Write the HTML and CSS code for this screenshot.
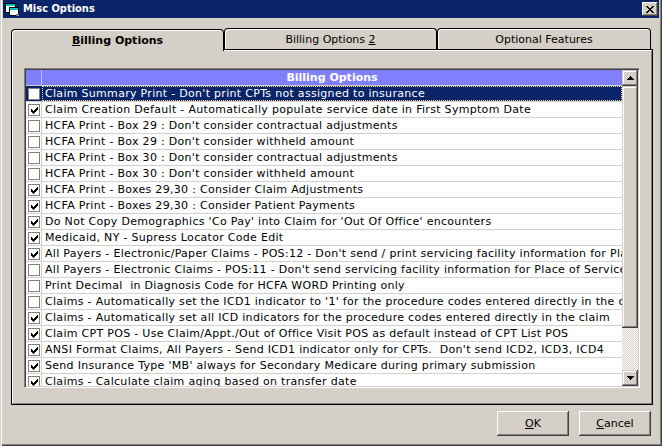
FILE: index.html
```html
<!DOCTYPE html>
<html>
<head>
<meta charset="utf-8">
<link rel="stylesheet" href="styles.css">
</head>
<body>
<div class="window">
  <div class="titlebar">
    <svg class="app-icon" viewBox="0 0 16 16" shape-rendering="crispEdges">
      <rect x="1" y="2" width="11" height="10" fill="#000"/>
      <rect x="2" y="3" width="9" height="2" fill="#00c0c0"/>
      <rect x="2" y="5" width="9" height="6" fill="#fff"/>
      <rect x="5" y="6" width="10" height="9" fill="#000"/>
      <rect x="6" y="7" width="8" height="2" fill="#00c0c0"/>
      <rect x="6" y="9" width="8" height="5" fill="#fff"/>
      <rect x="12" y="13" width="3" height="2" fill="#808080"/>
    </svg>
    <span class="title">Misc Options</span>
    <span class="close">
      <svg viewBox="0 0 8 7" width="8" height="7" shape-rendering="crispEdges">
        <path d="M0 0h2v1h1v1h2v-1h1v-1h2v1h-1v1h-1v1h-1v1h1v1h1v1h1v1h-2v-1h-1v-1h-2v1h-1v1h-2v-1h1v-1h1v-1h1v-1h-1v-1h-1v-1h-1z" fill="#000"/>
      </svg>
    </span>
  </div>
  <div class="client">
    <div class="tabs">
      <div class="tab tab-a active"><span><u>B</u>illing Options</span></div>
      <div class="tab tab-b"><span>Billing Options <u>2</u></span></div>
      <div class="tab tab-c"><span>Optional Features</span></div>
    </div>
    <div class="panel">
      <div class="list">
        <div class="grid">
          <div class="head"><span class="head-chk"></span><span class="head-label">Billing Options</span></div>
          <div class="row selected"><span class="chk-cell"><span class="box"></span></span><span class="text">Claim Summary Print - Don't print CPTs not assigned to insurance</span></div>
          <div class="row"><span class="chk-cell"><span class="box checked"><svg viewBox="0 0 7 7" width="7" height="7" shape-rendering="crispEdges"><path d="M0 2H1V3H2V4H3V3H4V2H5V1H6V0H7V3H6V4H5V5H4V6H3V7H2V6H1V5H0Z"/></svg></span></span><span class="text">Claim Creation Default - Automatically populate service date in First Symptom Date</span></div>
          <div class="row"><span class="chk-cell"><span class="box"></span></span><span class="text">HCFA Print - Box 29 : Don't consider contractual adjustments</span></div>
          <div class="row"><span class="chk-cell"><span class="box"></span></span><span class="text">HCFA Print - Box 29 : Don't consider withheld amount</span></div>
          <div class="row"><span class="chk-cell"><span class="box"></span></span><span class="text">HCFA Print - Box 30 : Don't consider contractual adjustments</span></div>
          <div class="row"><span class="chk-cell"><span class="box"></span></span><span class="text">HCFA Print - Box 30 : Don't consider withheld amount</span></div>
          <div class="row"><span class="chk-cell"><span class="box checked"><svg viewBox="0 0 7 7" width="7" height="7" shape-rendering="crispEdges"><path d="M0 2H1V3H2V4H3V3H4V2H5V1H6V0H7V3H6V4H5V5H4V6H3V7H2V6H1V5H0Z"/></svg></span></span><span class="text">HCFA Print - Boxes 29,30 : Consider Claim Adjustments</span></div>
          <div class="row"><span class="chk-cell"><span class="box checked"><svg viewBox="0 0 7 7" width="7" height="7" shape-rendering="crispEdges"><path d="M0 2H1V3H2V4H3V3H4V2H5V1H6V0H7V3H6V4H5V5H4V6H3V7H2V6H1V5H0Z"/></svg></span></span><span class="text">HCFA Print - Boxes 29,30 : Consider Patient Payments</span></div>
          <div class="row"><span class="chk-cell"><span class="box checked"><svg viewBox="0 0 7 7" width="7" height="7" shape-rendering="crispEdges"><path d="M0 2H1V3H2V4H3V3H4V2H5V1H6V0H7V3H6V4H5V5H4V6H3V7H2V6H1V5H0Z"/></svg></span></span><span class="text">Do Not Copy Demographics 'Co Pay' into Claim for 'Out Of Office' encounters</span></div>
          <div class="row"><span class="chk-cell"><span class="box checked"><svg viewBox="0 0 7 7" width="7" height="7" shape-rendering="crispEdges"><path d="M0 2H1V3H2V4H3V3H4V2H5V1H6V0H7V3H6V4H5V5H4V6H3V7H2V6H1V5H0Z"/></svg></span></span><span class="text">Medicaid, NY - Supress Locator Code Edit</span></div>
          <div class="row"><span class="chk-cell"><span class="box checked"><svg viewBox="0 0 7 7" width="7" height="7" shape-rendering="crispEdges"><path d="M0 2H1V3H2V4H3V3H4V2H5V1H6V0H7V3H6V4H5V5H4V6H3V7H2V6H1V5H0Z"/></svg></span></span><span class="text">All Payers - Electronic/Paper Claims - POS:12 - Don't send / print servicing facility information for Place of Service 12</span></div>
          <div class="row"><span class="chk-cell"><span class="box"></span></span><span class="text">All Payers - Electronic Claims - POS:11 - Don't send servicing facility information for Place of Service 11</span></div>
          <div class="row"><span class="chk-cell"><span class="box"></span></span><span class="text">Print Decimal &nbsp;in Diagnosis Code for HCFA WORD Printing only</span></div>
          <div class="row"><span class="chk-cell"><span class="box"></span></span><span class="text">Claims - Automatically set the ICD1 indicator to '1' for the procedure codes entered directly in the claim</span></div>
          <div class="row"><span class="chk-cell"><span class="box checked"><svg viewBox="0 0 7 7" width="7" height="7" shape-rendering="crispEdges"><path d="M0 2H1V3H2V4H3V3H4V2H5V1H6V0H7V3H6V4H5V5H4V6H3V7H2V6H1V5H0Z"/></svg></span></span><span class="text">Claims - Automatically set all ICD indicators for the procedure codes entered directly in the claim</span></div>
          <div class="row"><span class="chk-cell"><span class="box checked"><svg viewBox="0 0 7 7" width="7" height="7" shape-rendering="crispEdges"><path d="M0 2H1V3H2V4H3V3H4V2H5V1H6V0H7V3H6V4H5V5H4V6H3V7H2V6H1V5H0Z"/></svg></span></span><span class="text">Claim CPT POS - Use Claim/Appt./Out of Office Visit POS as default instead of CPT List POS</span></div>
          <div class="row"><span class="chk-cell"><span class="box checked"><svg viewBox="0 0 7 7" width="7" height="7" shape-rendering="crispEdges"><path d="M0 2H1V3H2V4H3V3H4V2H5V1H6V0H7V3H6V4H5V5H4V6H3V7H2V6H1V5H0Z"/></svg></span></span><span class="text">ANSI Format Claims, All Payers - Send ICD1 indicator only for CPTs. &nbsp;Don't send ICD2, ICD3, ICD4</span></div>
          <div class="row"><span class="chk-cell"><span class="box checked"><svg viewBox="0 0 7 7" width="7" height="7" shape-rendering="crispEdges"><path d="M0 2H1V3H2V4H3V3H4V2H5V1H6V0H7V3H6V4H5V5H4V6H3V7H2V6H1V5H0Z"/></svg></span></span><span class="text">Send Insurance Type 'MB' always for Secondary Medicare during primary submission</span></div>
          <div class="row"><span class="chk-cell"><span class="box checked"><svg viewBox="0 0 7 7" width="7" height="7" shape-rendering="crispEdges"><path d="M0 2H1V3H2V4H3V3H4V2H5V1H6V0H7V3H6V4H5V5H4V6H3V7H2V6H1V5H0Z"/></svg></span></span><span class="text">Claims - Calculate claim aging based on transfer date</span></div>
        </div>
        <div class="scrollbar">
          <div class="sb-btn"><svg viewBox="0 0 7 4" width="7" height="4" shape-rendering="crispEdges"><path d="M3 0H4V1H5V2H6V3H7V4H0V3H1V2H2V1H3Z"/></svg></div>
          <div class="sb-track"><div class="sb-thumb"></div></div>
          <div class="sb-btn"><svg viewBox="0 0 7 4" width="7" height="4" shape-rendering="crispEdges"><path d="M0 0H7V1H6V2H5V3H4V4H3V3H2V2H1V1H0Z"/></svg></div>
        </div>
      </div>
    </div>
    <div class="buttons">
      <button class="btn"><u>O</u>K</button>
      <button class="btn"><u>C</u>ancel</button>
    </div>
  </div>
</div>
</body>
</html>
```
FILE: styles.css
```css
* { box-sizing: border-box; }
html, body { margin: 0; padding: 0; }
body {
  width: 662px;
  height: 446px;
  overflow: hidden;
  background: #d4d0c8;
  font-family: "DejaVu Sans", Verdana, sans-serif;
  font-size: 11px;
  color: #000;
}
.window {
  width: 662px;
  height: 446px;
  background: #d4d0c8;
  padding: 0 3px 3px 3px;
  display: flex;
  flex-direction: column;
  box-shadow: inset 1px 0 #d4d0c8, inset 2px 0 #fff, inset -1px -1px #404040, inset -2px -2px #808080;
}
.titlebar {
  flex: none;
  height: 18px;
  background: #0a246a;
  color: #fff;
  display: flex;
  align-items: center;
}
.app-icon { width: 16px; height: 16px; margin-left: 1px; flex: none; }
.title {
  flex: 1;
  margin-left: 3px;
  font-family: "DejaVu Sans Condensed", "DejaVu Sans", sans-serif;
  font-weight: bold;
  font-size: 11px;
  line-height: 18px;
}
.close {
  flex: none;
  width: 16px;
  height: 14px;
  margin-right: 1px;
  background: #d4d0c8;
  display: flex;
  align-items: center;
  justify-content: center;
  box-shadow: inset -1px -1px #404040, inset 1px 1px #fff, inset -2px -2px #808080;
}
.client {
  flex: 1;
  padding: 10px 6px 0 8px;
  display: flex;
  flex-direction: column;
}
.tabs {
  display: flex;
  align-items: flex-end;
  height: 21px;
  position: relative;
  z-index: 1;
}
.tab {
  height: 21px;
  background: #d4d0c8;
  border: 1px solid #000;
  border-bottom: 0;
  border-radius: 4px 4px 0 0;
  box-shadow: inset 1px 1px #fff;
  display: flex;
  align-items: center;
  justify-content: center;
  line-height: 13px;
}
.tab-a { width: 213px; }
.tab-b { width: 213px; }
.tab-c { width: 214px; }
.tab.active {
  height: 22px;
  margin-bottom: -2px;
  font-weight: bold;
}
.panel {
  width: 642px;
  height: 356px;
  border: 1px solid #000;
  box-shadow: inset 1px 1px #fff, inset -1px -1px #808080;
  padding: 18px 0 0 12px;
}
.list {
  width: 616px;
  height: 320px;
  border: 1px solid;
  border-color: #808080 #fff #fff #808080;
  box-shadow: inset 1px 1px #404040, inset -1px -1px #d4d0c8;
  padding: 1px;
  display: flex;
}
.grid {
  width: 596px;
  background: #fff;
  overflow: hidden;
}
.head {
  display: flex;
  height: 16px;
  background: #8080ff;
  border-bottom: 1px solid #d4d0c8;
}
.head-chk {
  width: 16px;
  border-right: 1px solid #c0c0ff;
}
.head-label {
  flex: 1;
  text-align: center;
  color: #fff;
  font-weight: bold;
  line-height: 15px;
}
.row {
  display: flex;
  height: 16px;
  border-bottom: 1px solid #d4d0c8;
  line-height: 15px;
}
.chk-cell {
  width: 16px;
  flex: none;
  border-right: 1px solid #d4d0c8;
  padding: 2px 0 0 2px;
}
.box {
  width: 12px;
  height: 12px;
  border: 1px solid #808080;
  background: #fff;
  display: flex;
  align-items: center;
  justify-content: center;
}
.box svg { fill: #000; }
.text {
  flex: 1;
  padding-left: 3px;
  white-space: nowrap;
  overflow: hidden;
  letter-spacing: 0.3px;
}
.row.selected { background: #0a246a; color: #fff; }
.row.selected .chk-cell { border-right-color: #0a246a; }
.row.selected .text { outline: 1px dotted #f5db95; outline-offset: -1px; }
.scrollbar {
  width: 16px;
  flex: none;
  display: flex;
  flex-direction: column;
}
.sb-btn, .sb-thumb {
  background: #d4d0c8;
  box-shadow: inset -1px -1px #404040, inset 1px 1px #d4d0c8, inset -2px -2px #808080, inset 2px 2px #fff;
}
.sb-btn {
  flex: none;
  height: 16px;
  display: flex;
  align-items: center;
  justify-content: center;
}
.sb-btn svg { fill: #000; }
.sb-track {
  flex: 1;
  background: repeating-conic-gradient(#fff 0 25%, #d4d0c8 0 50%) 0 0 / 2px 2px;
}
.sb-thumb { height: 242px; }
.buttons {
  display: flex;
  justify-content: flex-end;
  gap: 10px;
  margin-top: 6px;
  padding-right: 2px;
}
.btn {
  width: 72px;
  height: 25px;
  padding: 0;
  border: 0;
  background: #d4d0c8;
  color: #000;
  font-family: "DejaVu Sans", Verdana, sans-serif;
  font-size: 11px;
  box-shadow: inset -1px -1px #404040, inset 1px 1px #fff, inset -2px -2px #808080;
}
```
